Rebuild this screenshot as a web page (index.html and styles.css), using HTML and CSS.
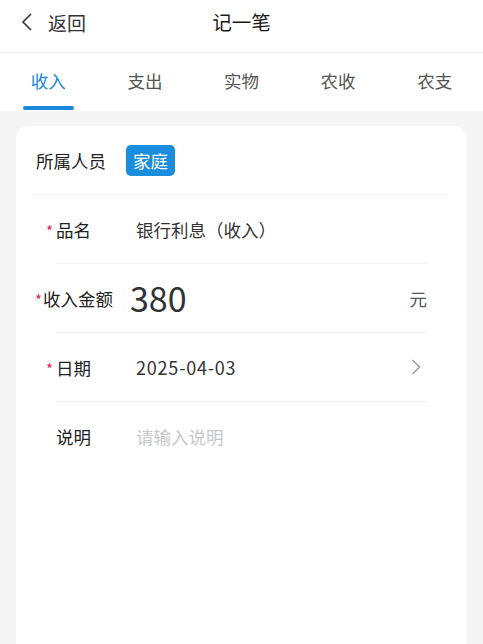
FILE: index.html
```html
<!DOCTYPE html>
<html lang="zh-CN">
<head>
  <meta charset="UTF-8">
  <meta name="viewport" content="width=device-width, initial-scale=1.0">
  <title>记一笔</title>
  <link rel="stylesheet" href="styles.css">
</head>
<body>
  <header class="top-bar">
    <a class="back" href="#">
      <svg class="back-icon" width="12" height="18" viewBox="0 0 12 18">
        <path d="M10 1 L2 9 L10 17" fill="none" stroke="#333" stroke-width="1.6" />
      </svg>
      <span>返回</span>
    </a>
    <h1 class="title">记一笔</h1>
  </header>

  <nav class="tabs">
    <div class="tab active">收入</div>
    <div class="tab">支出</div>
    <div class="tab">实物</div>
    <div class="tab">农收</div>
    <div class="tab">农支</div>
  </nav>

  <main class="page">
    <div class="card">
      <div class="member-row">
        <span class="member-label">所属人员</span>
        <span class="tag">家庭</span>
      </div>

      <div class="field">
        <label class="field-label"><span class="req">*</span>品名</label>
        <div class="field-value">银行利息（收入）</div>
      </div>

      <div class="field">
        <label class="field-label wide"><span class="req">*</span>收入金额</label>
        <div class="field-value amount">380</div>
        <span class="unit">元</span>
      </div>

      <div class="field">
        <label class="field-label"><span class="req">*</span>日期</label>
        <div class="field-value date">2025-04-03</div>
        <svg class="arrow" width="10" height="18" viewBox="0 0 10 18">
          <path d="M1.5 2 L8.5 9 L1.5 16" fill="none" stroke="#999" stroke-width="1.4" />
        </svg>
      </div>

      <div class="field last">
        <label class="field-label">说明</label>
        <input class="field-input" type="text" placeholder="请输入说明" />
      </div>
    </div>
  </main>
</body>
</html>
```

FILE: styles.css
```css
* {
  box-sizing: border-box;
}

html, body {
  height: 100%;
}

body {
  margin: 0;
  padding: 0;
  font-family: "Noto Sans CJK SC", "Noto Sans", sans-serif;
  color: #333;
  background: #f5f5f5;
  overflow: hidden;
  display: flex;
  flex-direction: column;
}

.top-bar {
  position: relative;
  height: 53px;
  padding-bottom: 9px;
  background: #fff;
  border-bottom: 1px solid #f0f0f0;
  display: flex;
  align-items: center;
  justify-content: center;
}

.back {
  position: absolute;
  left: 21px;
  top: 0;
  height: 44px;
  display: flex;
  align-items: center;
  gap: 15px;
  color: #333;
  text-decoration: none;
  font-size: 19px;
}

.title {
  margin: 0;
  font-size: 19.5px;
  font-weight: normal;
  color: #1a1a1a;
}

.tabs {
  display: flex;
  height: 58px;
  background: #fff;
}

.tab {
  flex: 1;
  position: relative;
  display: flex;
  align-items: center;
  justify-content: center;
  font-size: 17.5px;
  color: #555;
  padding-bottom: 4px;
}

.tab.active {
  color: #1a88d8;
}

.tab.active::after {
  content: "";
  position: absolute;
  left: 23px;
  width: 51px;
  bottom: 1px;
  height: 4px;
  border-radius: 2px;
  background: #1a88d8;
}

.page {
  flex: 1;
  padding: 15px 16px 0;
  display: flex;
  flex-direction: column;
}

.card {
  flex: 1;
  background: #fff;
  border-radius: 12px 12px 0 0;
}

.member-row {
  display: flex;
  align-items: center;
  height: 69px;
  padding-left: 3px;
  margin: 0 19px 0 17px;
  border-bottom: 1px solid #f2f2f2;
}

.member-label {
  font-size: 17.5px;
  color: #222;
  width: 90px;
}

.tag {
  background: #1a8ddf;
  color: #fff;
  font-size: 17.5px;
  line-height: 31px;
  padding: 0 7px;
  border-radius: 5px;
}

.field {
  display: flex;
  align-items: center;
  height: 69px;
  margin: 0 40px;
  border-bottom: 1px solid #f2f2f2;
}

.field.last {
  border-bottom: none;
}

.field-label {
  flex: 0 0 80px;
  font-size: 17.5px;
  color: #222;
}

.field-label.wide {
  flex-basis: 95px;
  margin-left: -21px;
}

.req {
  color: #e0245e;
  font-size: 15px;
  display: inline-block;
  width: 10px;
  margin-left: -10px;
}

.wide .req {
  margin-left: 0;
  width: 8px;
}

.field-value {
  flex: 1;
  font-size: 17.5px;
  color: #333;
}

.field-value.date {
  font-size: 18px;
  letter-spacing: 0.8px;
}

.field-value.amount {
  font-size: 34px;
  color: #333;
  padding-bottom: 2px;
}

.unit {
  font-size: 17.5px;
  color: #555;
}

.arrow {
  margin-right: 6px;
}

.field-input {
  flex: 1;
  border: none;
  outline: none;
  padding: 0;
  font-family: inherit;
  font-size: 17.5px;
  color: #333;
}

.field-input::placeholder {
  color: #c8c8c8;
}
```
